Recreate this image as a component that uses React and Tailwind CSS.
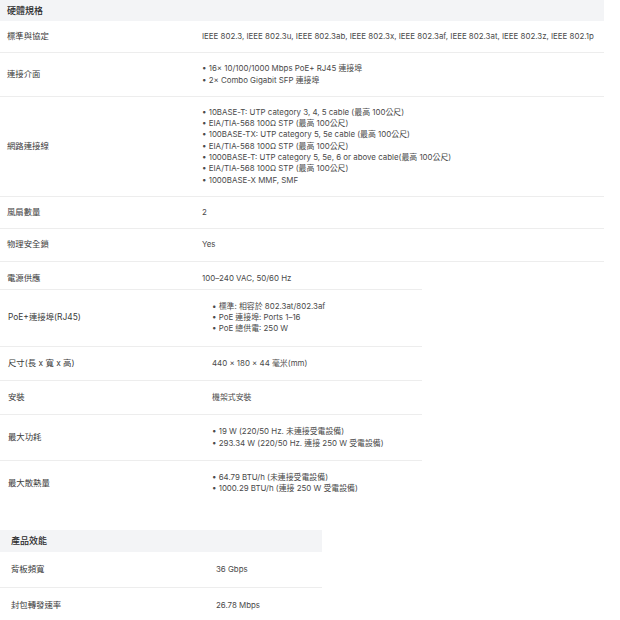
const HARDWARE = [
  { label: '標準與協定', value: 'IEEE 802.3, IEEE 802.3u, IEEE 802.3ab, IEEE 802.3x, IEEE 802.3af, IEEE 802.3at, IEEE 802.3z, IEEE 802.1p' },
  { label: '連接介面', list: ['16× 10/100/1000 Mbps PoE+ RJ45 連接埠', '2× Combo Gigabit SFP 連接埠'] },
  {
    label: '網路連接線',
    list: [
      '10BASE-T: UTP category 3, 4, 5 cable (最高 100公尺)',
      'EIA/TIA-568 100Ω STP (最高 100公尺)',
      '100BASE-TX: UTP category 5, 5e cable (最高 100公尺)',
      'EIA/TIA-568 100Ω STP (最高 100公尺)',
      '1000BASE-T: UTP category 5, 5e, 6 or above cable(最高 100公尺)',
      'EIA/TIA-568 100Ω STP (最高 100公尺)',
      '1000BASE-X MMF, SMF',
    ],
  },
  { label: '風扇數量', value: '2' },
  { label: '物理安全鎖', value: 'Yes' },
]

const POWER = [
  { label: 'PoE+連接埠(RJ45)', list: ['標準: 相容於 802.3at/802.3af', 'PoE 連接埠: Ports 1–16', 'PoE 總供電: 250 W'] },
  { label: '尺寸(長 x 寬 x 高)', value: '440 × 180 × 44 毫米(mm)' },
  { label: '安裝', value: '機架式安裝' },
  { label: '最大功耗', list: ['19 W (220/50 Hz. 未連接受電設備)', '293.34 W (220/50 Hz. 連接 250 W 受電設備)'] },
  { label: '最大散熱量', list: ['64.79 BTU/h (未連接受電設備)', '1000.29 BTU/h (連接 250 W 受電設備)'], last: true },
]

const PERF = [
  { label: '背板頻寬', value: '36 Gbps' },
  { label: '封包轉發速率', value: '26.78 Mbps' },
]

function Value({ row }) {
  if (row.list) {
    return (
      <ul>
        {row.list.map((t, i) => <li key={i}>• {t}</li>)}
      </ul>
    )
  }
  return <div>{row.value}</div>
}

export default function App() {
  return (
    <div className="min-h-[620px] bg-white font-['Inter','Noto_Sans_CJK_TC',sans-serif] text-[7.9px] leading-[11.3px] text-[#4a4a4a]">
      {/* 硬體規格 */}
      <div className="w-[604px]">
        <div className="flex h-[21px] items-center bg-[#f3f4f6] pl-[7px] text-[9px] font-medium text-[#2a2a2a]">硬體規格</div>
        {HARDWARE.map(row => (
          <div key={row.label} className="grid grid-cols-[195px_1fr] items-center border-b border-[#ededed] py-[10px] pl-[7px]">
            <div className="text-[8.4px] text-[#3a3a3a]">{row.label}</div>
            <Value row={row} />
          </div>
        ))}
        <div className="grid grid-cols-[195px_1fr] pt-[11px] pb-[5px] pl-[7px]">
          <div className="text-[8.4px] text-[#3a3a3a]">電源供應</div>
          <div>100–240 VAC, 50/60 Hz</div>
        </div>
      </div>

      {/* PoE / power */}
      <div className="w-[422px] border-t border-[#ededed]">
        {POWER.map(row => (
          <div key={row.label} className={`grid grid-cols-[204px_1fr] items-center py-[11px] pl-[8px] ${row.last ? '' : 'border-b border-[#ededed]'}`}>
            <div className="text-[8.4px] text-[#3a3a3a]">{row.label}</div>
            <Value row={row} />
          </div>
        ))}
      </div>

      {/* 產品效能 */}
      <div className="mt-[24px] w-[322px]">
        <div className="flex h-[22px] items-center bg-[#f3f4f6] pl-[11px] text-[9px] font-medium text-[#2a2a2a]">產品效能</div>
        {PERF.map(row => (
          <div key={row.label} className="grid grid-cols-[205px_1fr] items-center border-b border-[#ededed] py-[12px] pl-[11px]">
            <div className="text-[8.4px] text-[#3a3a3a]">{row.label}</div>
            <Value row={row} />
          </div>
        ))}
      </div>
    </div>
  )
}
